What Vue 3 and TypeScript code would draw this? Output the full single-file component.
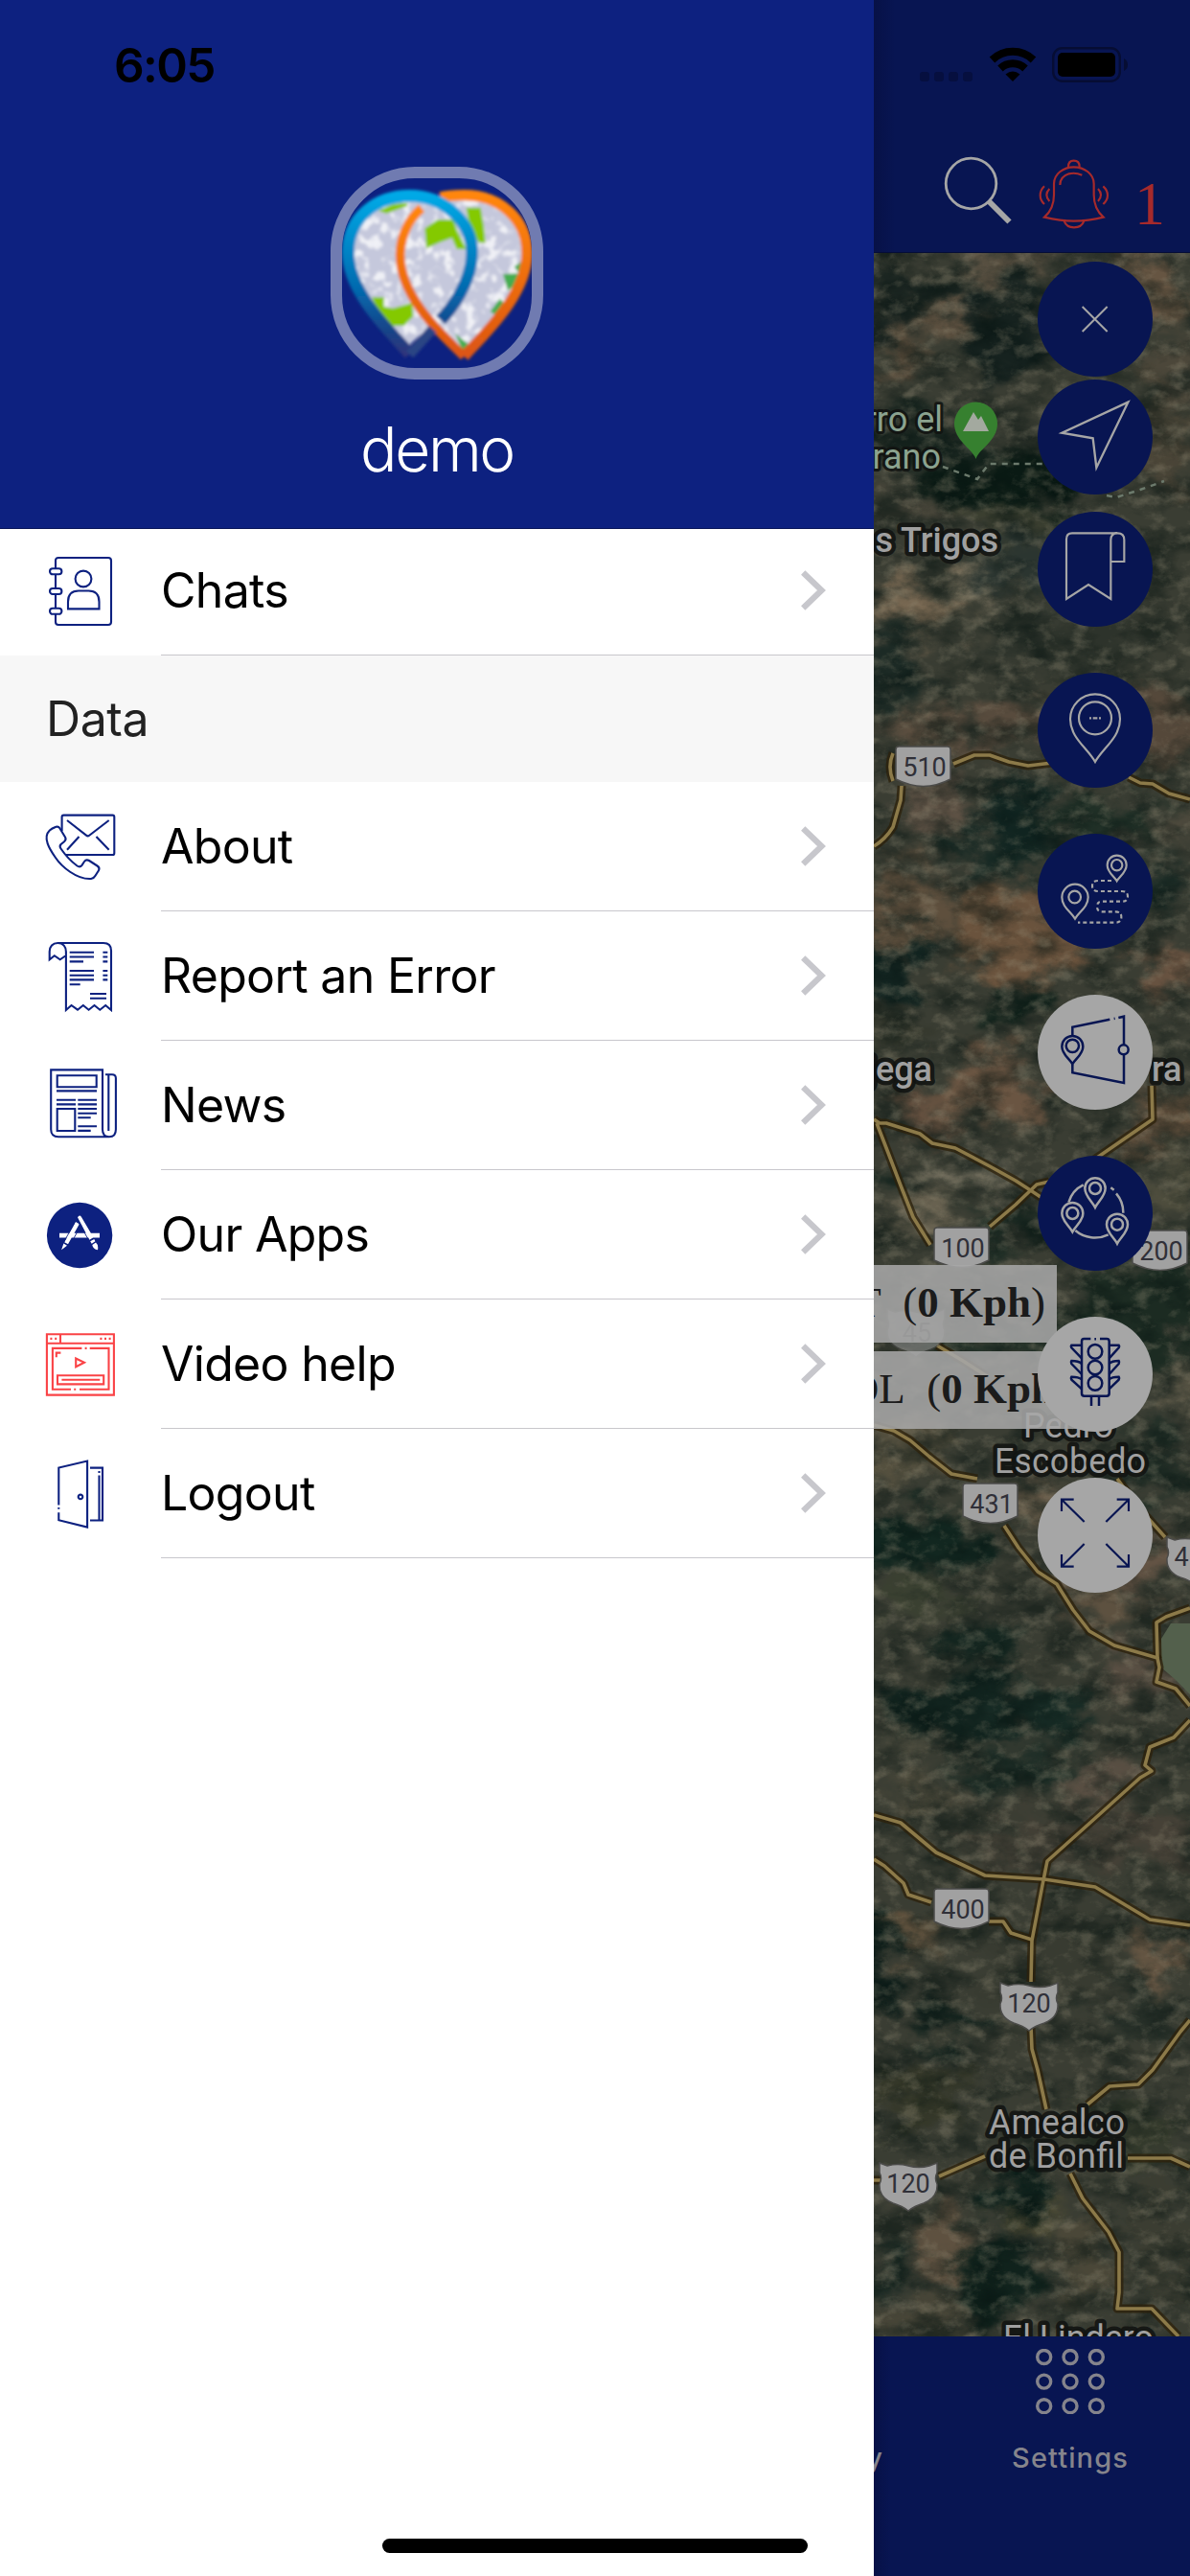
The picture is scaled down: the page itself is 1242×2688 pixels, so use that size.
<script setup lang="ts">
interface Shape {
  d: string
  filled?: boolean
  dash?: string
  width?: number
  knock?: boolean
}
interface MenuItem {
  label: string
  icon: Shape[]
  tone: string
}
interface MapButton {
  name: string
  light: boolean
  gap: number
  width: number
  shapes: Shape[]
}
interface Shield {
  text: string
  x: number
  y: number
  kind: 'state' | 'federal'
}
interface Blob {
  x: number
  y: number
  rx: number
  ry: number
  c: string
}

const ring = (cx: number, cy: number, r: number): string =>
  `M${cx - r} ${cy}a${r} ${r} 0 1 0 ${2 * r} 0a${r} ${r} 0 1 0 ${-2 * r} 0z`

const box = (x: number, y: number, w: number, h: number): string => `M${x} ${y}h${w}v${h}h${-w}z`

const pin = (cx: number, cy: number, r: number, tip: number): string =>
  `M${cx} ${tip}C${cx - r * 0.3} ${cy + (tip - cy) * 0.68} ${cx - r} ${cy + r * 0.75} ${cx - r} ${cy}` +
  `a${r} ${r} 0 0 1 ${2 * r} 0C${cx + r} ${cy + r * 0.75} ${cx + r * 0.3} ${cy + (tip - cy) * 0.68} ${cx} ${tip}z`

const navy = '#0d2180'
const red = '#fa4346'

const chats: MenuItem = {
  label: 'Chats',
  tone: navy,
  icon: [
    { d: 'M10 12V4Q10 1 13 1H65Q68 1 68 4V68Q68 71 65 71H13Q10 71 10 68V60M10 19V33M10 39V54' },
    { d: 'M7 12.3H13.4a3 3 0 0 1 0 6H7a3 3 0 0 1 0-6zM7 33H13.4a3 3 0 0 1 0 6H7a3 3 0 0 1 0-6zM7 53.8H13.4a3 3 0 0 1 0 6H7a3 3 0 0 1 0-6z' },
    { d: ring(39, 23, 8.4) + 'M23 54.4V47Q23 35.5 34 35.5H44.500Q55.500 35.5 55.500 47V54.400z' },
  ],
}

const menu: MenuItem[] = [
  {
    label: 'About',
    tone: navy,
    icon: [
      { d: 'M16.600 19V4.500Q16.600 2.600 18.500 2.600H69.500Q71.300 2.600 71.300 4.500V42.200Q71.300 44 69.500 44H20' },
      { d: 'M22 8L42 23.700Q43.600 25 45.200 23.700L65.700 8M34.500 25L22 38.800M52.500 25L65.700 38.800' },
      { d: 'M3.800 18.500Q6 16.500 10.500 14.800Q13 14 14.200 16L20 25.500Q21.500 28 19 30.200L15.600 33Q13.700 35 15.500 37.500Q23 48.500 32.500 55.500Q35.500 57.500 37.500 54.800L40 51Q42 48.200 45 50L53.500 55.500Q56.500 57.500 55 60.300L51.500 65.700Q50 68.500 47 69C32 70 16 56 10 47C4 38.500 -4 26 3.800 18.500z' },
    ],
  },
  {
    label: 'Report an Error',
    tone: navy,
    icon: [
      { d: 'M20.900 14L14.700 18.300L8.800 14.200L3.700 18.300V10C3.700 4.500 7 1 12.300 1H60Q68 1 68 9V71L62.200 66L56.300 70.700L50.500 66L44.600 70.700L38.800 66L33 70.700L26.500 66L20.900 71V10C20.900 5 18 1 12.300 1' },
      { d: 'M24.700 10.800H50M24.700 15.500H50M24.700 20.400H39M24.700 30H50M24.700 34.700H50M24.700 39.400H50M24.700 44.300H35.700M59.400 10.800H64.300M59.400 15.500H64.300M59.400 20.400H64.300M59.400 30H64.300M59.400 34.700H64.300M59.400 39.400H64.300M46 54H63M46 58.700H63' },
    ],
  },
  {
    label: 'News',
    tone: navy,
    icon: [
      { d: 'M62 3.200H69Q72.900 3.200 72.900 7V60.500Q72.900 68.300 66 68.300H13Q5.200 68.300 5.200 60.500V-1.600H59V60.500Q59 68.300 66 68.300M65.300 3.200V62' },
      { d: box(11.7, 4.3, 41, 11.9) + box(11.7, 39, 18.6, 23) },
      { d: 'M11 20.400H53M11 29.700H31M33.300 29.700H53M11 34.400H31M33.300 34.400H53M33.300 39H53M33.300 43.700H53M33.300 48.300H46.700M33.300 57.200H53M33.300 61.900H46.700' },
    ],
  },
  {
    label: 'Our Apps',
    tone: navy,
    icon: [
      { d: ring(35.1, 36, 34.2), filled: true },
      { d: 'M14 33.700H56V38.500H14zM31 22L34.800 24.200L23 45.300L19.200 43.200zM18.400 44.600L22 46.800L16.100 51.300zM33 17.300Q35 14 37 17L49.500 38.300L45.400 40.700zM46.200 42.300L50.300 39.900L51.400 42.200L47.700 44.700zM48.300 46L52 43.500Q55 46 54 51.300Q49 50.500 48.300 46z', filled: true, knock: true },
      { d: 'M30 22.500L18.500 43.300M36.700 25.500L24.500 47M33 21L45.500 42.500', width: 0.9 },
    ],
  },
  {
    label: 'Video help',
    tone: red,
    icon: [
      { d: box(0.9, 4.2, 70, 63.4) + 'M1 13.700H71M15 4V13.700' },
      { d: 'M4.400 8.900h2M9.200 8.900h2M56.400 8.900h2M61 8.900h2M65.600 8.900h2M40.600 18.900h2M29.200 61.800h2' },
      { d: 'M37.400 18.900H6.900V61.800H26M35 61.800H65.500V18.900H45.700M10.800 28.200V23.600H15.400M31.200 29.500L40 33.700L31.200 38.300z' },
      { d: box(12, 47.200, 48.200, 9.200) + 'M16.400 51.800H56.300' },
    ],
  },
  {
    label: 'Logout',
    tone: navy,
    icon: [
      { d: 'M13.300 47.500V8.600L43.100 1.600V70.600L13.300 63.300V55.300M13.300 50v1.700' },
      { d: ring(36, 38.900, 2.300) },
      { d: 'M46 8.600H59V63.500H46M55.500 16.500V63.500M55.500 12v2' },
    ],
  },
]

const buttons: MapButton[] = [
  { name: 'close', light: false, gap: 0, width: 6, shapes: [{ d: 'M140 141L218 219M218 141L140 219' }] },
  { name: 'locate', light: false, gap: 3, width: 7, shapes: [{ d: 'M283 71L76 167L173 184L184 276z' }] },
  {
    name: 'bookmark', light: false, gap: 18, width: 6.5,
    shapes: [{ d: 'M249 67H108Q90 67 90 86V273L159 228L229 273V88Q229 67 250 67Q271 67 271 88V156H229' }],
  },
  {
    name: 'place', light: false, gap: 48, width: 6.5,
    shapes: [{ d: pin(180, 145, 78, 279) + ring(180, 142, 51) }, { d: 'M162 142h6M173 142h14M192 142h6' }],
  },
  {
    name: 'route', light: false, gap: 48, width: 6.5,
    shapes: [
      { d: pin(248, 98, 30, 148) + ring(248, 98, 17) + pin(117, 199, 41, 266) + ring(116, 198, 19) },
      { d: 'M231 147H190Q171 147 171 163Q171 180 190 180H264Q282 180 282 196Q282 212 264 212H202Q186 212 186 228Q186 244 202 244H244Q262 244 262 261Q262 278 244 278H126', dash: '12 9' },
    ],
  },
  {
    name: 'geofence', light: true, gap: 48, width: 7.5,
    shapes: [
      { d: 'M226 77L109 101V126M109 219V244L270 276V189M270 157V68L253 72M239 75l3 -0.500' },
      { d: ring(269, 172, 15) + pin(109, 162, 33, 217) + ring(109, 160, 20) },
    ],
  },
  {
    name: 'group', light: false, gap: 48, width: 7.5,
    shapes: [
      { d: 'M97 146A88 88 0 0 1 143 91M118 234A95 95 0 0 0 221 247M246 118A92 92 0 0 1 268 179M229 100L239 107' },
      { d: pin(180, 102, 32, 162) + ring(180, 102, 18) + pin(109, 180, 33, 238) + ring(109, 180, 18) + pin(249, 215, 33, 275) + ring(249, 215, 18) },
    ],
  },
  {
    name: 'traffic', light: true, gap: 48, width: 7.5,
    shapes: [
      { d: 'M166 69H145Q138 69 138 77V240Q138 248 146 248H216Q224 248 224 240V77Q224 69 216 69H195M178 70h5M168 249V279M192 249V279' },
      { d: ring(180, 109, 22) + ring(180, 159, 22) + ring(180, 208, 22) },
      { d: 'M138 89H106Q103 92 106 97L138 130M138 147Q128 138 106 138Q103 142 106 147L138 180M138 196Q128 188 106 188Q103 192 106 197L138 226' },
      { d: 'M224 89H254Q257 92 254 97L224 130M224 147Q232 138 254 138Q257 142 254 147L224 180M224 196Q232 188 254 188Q257 192 254 197L224 226' },
    ],
  },
  {
    name: 'expand', light: true, gap: 48, width: 6.5,
    shapes: [{ d: 'M146 138L76 69M75 105V68H113M214 138L284 69M248 68H285V105M146 207L76 277M75 240V278H113M214 207L284 277M248 278H285V240' }],
  },
]

const roads: string[] = [
  'M932 786Q926 800 932 815M941 820L940 835L932 863Q924 876 912 883',
  'M995 797L1017 788L1033 788L1053 795L1073 799L1098 796M1178 811L1190 817L1203 818L1220 828L1242 834',
  'M912 1168L918 1172L925 1172L960 1183L973 1193L997 1198L1033 1217L1060 1232L1077 1243L1095 1255',
  'M915 1172L927 1203L940 1237L953 1270L971 1299',
  'M1033 1280L1060 1257L1082 1236L1095 1233M1142 1210L1203 1168L1202 1133',
  'M912 1487L933 1493L950 1503L970 1520L993 1538L1020 1543M1048 1592L1063 1615L1083 1640L1103 1653L1120 1680L1137 1702L1163 1717L1208 1730L1210 1740L1207 1755L1227 1762L1242 1780',
  'M1208 1730L1207 1693L1217 1687L1242 1678M1166 1543L1190 1575L1216 1604',
  'M1242 1795L1225 1813L1200 1823L1195 1842L1202 1848L1190 1855L1140 1900L1093 1942L1088 1967L1077 2025L1076 2068M1076 2115L1077 2138L1083 2160L1092 2201',
  'M912 1894L940 1902L977 1933L1028 1957L1090 1961L1143 1969L1200 2003L1242 2009',
  'M912 1940L923 1947L943 1965L948 1977L972 1985M1032 2005L1047 2005L1055 2017L1077 2024',
  'M1242 2108L1232 2120L1203 2160L1188 2175L1158 2177L1135 2196',
  'M980 2271L1028 2250M1177 2252L1222 2252L1242 2261M912 2275H920',
  'M1117 2268L1130 2294L1157 2329L1168 2350L1168 2392L1166 2409L1202 2409L1230 2438',
  'M978 1404L1005 1420L1030 1436',
]

const shields: Shield[] = [
  { text: '510', x: 935, y: 779, kind: 'state' },
  { text: '100', x: 975, y: 1281, kind: 'state' },
  { text: '200', x: 1182, y: 1284, kind: 'state' },
  { text: '431', x: 1005, y: 1548, kind: 'state' },
  { text: '400', x: 975, y: 1971, kind: 'state' },
  { text: '120', x: 1044, y: 2069, kind: 'federal' },
  { text: '120', x: 918, y: 2257, kind: 'federal' },
]

const blobs: Blob[] = [
  { x: 960, y: 300, rx: 60, ry: 14, c: '#18231f' }, { x: 925, y: 330, rx: 40, ry: 16, c: '#16211e' },
  { x: 985, y: 335, rx: 32, ry: 9, c: '#6e5a46' }, { x: 935, y: 370, rx: 30, ry: 20, c: '#594b3a' },
  { x: 1050, y: 275, rx: 55, ry: 13, c: '#5f5444' }, { x: 1200, y: 300, rx: 40, ry: 36, c: '#665542' },
  { x: 1050, y: 350, rx: 40, ry: 50, c: '#16221f' }, { x: 1225, y: 380, rx: 25, ry: 30, c: '#4c473a' },
  { x: 960, y: 460, rx: 60, ry: 28, c: '#18251f' }, { x: 1060, y: 500, rx: 90, ry: 28, c: '#0a1a14' },
  { x: 1210, y: 450, rx: 30, ry: 50, c: '#4b4537' }, { x: 1040, y: 545, rx: 60, ry: 20, c: '#3b3f30' },
  { x: 950, y: 535, rx: 40, ry: 14, c: '#49463a' }, { x: 960, y: 625, rx: 48, ry: 26, c: '#776751' },
  { x: 1015, y: 610, rx: 25, ry: 12, c: '#7c7460' }, { x: 1075, y: 590, rx: 50, ry: 30, c: '#2b3530' },
  { x: 1100, y: 670, rx: 90, ry: 30, c: '#2d332b' }, { x: 930, y: 700, rx: 36, ry: 34, c: '#1c2a25' },
  { x: 1060, y: 750, rx: 50, ry: 22, c: '#584b3d' }, { x: 960, y: 765, rx: 60, ry: 16, c: '#5d4f40' },
  { x: 1210, y: 760, rx: 40, ry: 40, c: '#55483a' }, { x: 975, y: 845, rx: 34, ry: 30, c: '#5d5144' },
  { x: 1060, y: 850, rx: 50, ry: 28, c: '#102420' }, { x: 1160, y: 860, rx: 70, ry: 22, c: '#1f2f26' },
  { x: 1040, y: 890, rx: 50, ry: 14, c: '#152823' }, { x: 1225, y: 860, rx: 30, ry: 15, c: '#4e4a3d' },
  { x: 950, y: 950, rx: 50, ry: 40, c: '#5e4f3d' }, { x: 1065, y: 975, rx: 66, ry: 50, c: '#6a533d' },
  { x: 925, y: 1010, rx: 38, ry: 40, c: '#142622' }, { x: 1215, y: 925, rx: 30, ry: 24, c: '#1d2d27' },
  { x: 1215, y: 1020, rx: 34, ry: 28, c: '#675240' }, { x: 1060, y: 1052, rx: 34, ry: 18, c: '#0f211a' },
  { x: 1040, y: 1135, rx: 60, ry: 34, c: '#6a5542' }, { x: 965, y: 1160, rx: 30, ry: 22, c: '#64503f' },
  { x: 930, y: 1070, rx: 30, ry: 20, c: '#35382d' }, { x: 1215, y: 1170, rx: 32, ry: 34, c: '#66523e' },
  { x: 1015, y: 1225, rx: 50, ry: 14, c: '#75705f' }, { x: 950, y: 1262, rx: 36, ry: 16, c: '#6b6452' },
  { x: 920, y: 1225, rx: 16, ry: 20, c: '#1e2e26' }, { x: 1060, y: 1280, rx: 44, ry: 22, c: '#1d2c24' },
  { x: 1220, y: 1240, rx: 25, ry: 30, c: '#4e4d3d' }, { x: 1180, y: 1370, rx: 80, ry: 60, c: '#1c2b22' },
  { x: 1040, y: 1405, rx: 80, ry: 18, c: '#25332a' }, { x: 1235, y: 1450, rx: 18, ry: 30, c: '#5f5a49' },
  { x: 955, y: 1515, rx: 40, ry: 24, c: '#56513f' }, { x: 1080, y: 1560, rx: 40, ry: 22, c: '#665a48' },
  { x: 1200, y: 1530, rx: 40, ry: 40, c: '#222f27' }, { x: 960, y: 1610, rx: 70, ry: 34, c: '#122720' },
  { x: 1150, y: 1670, rx: 40, ry: 30, c: '#5d5140' }, { x: 1200, y: 1630, rx: 24, ry: 24, c: '#635344' },
  { x: 950, y: 1670, rx: 50, ry: 22, c: '#3a4031' }, { x: 1030, y: 1715, rx: 40, ry: 24, c: '#13251f' },
  { x: 1195, y: 1745, rx: 44, ry: 22, c: '#584e42' }, { x: 990, y: 1785, rx: 66, ry: 38, c: '#11231e' },
  { x: 1085, y: 1790, rx: 50, ry: 28, c: '#162a24' }, { x: 935, y: 1815, rx: 26, ry: 14, c: '#545243' },
  { x: 1060, y: 1850, rx: 60, ry: 20, c: '#1d2d26' }, { x: 1140, y: 1860, rx: 44, ry: 20, c: '#594f43' },
  { x: 960, y: 1880, rx: 50, ry: 14, c: '#4a483a' }, { x: 1100, y: 1925, rx: 90, ry: 24, c: '#423f35' },
  { x: 1190, y: 1910, rx: 50, ry: 30, c: '#464137' }, { x: 915, y: 2045, rx: 24, ry: 50, c: '#0d1d19' },
  { x: 955, y: 2015, rx: 28, ry: 22, c: '#5f513d' }, { x: 1090, y: 2040, rx: 80, ry: 40, c: '#383b31' },
  { x: 1205, y: 2050, rx: 24, ry: 26, c: '#665643' }, { x: 985, y: 2115, rx: 28, ry: 14, c: '#10211c' },
  { x: 1190, y: 2100, rx: 40, ry: 25, c: '#2c342c' }, { x: 960, y: 2182, rx: 50, ry: 30, c: '#343728' },
  { x: 1180, y: 2224, rx: 60, ry: 30, c: '#343a2c' }, { x: 1060, y: 2288, rx: 30, ry: 24, c: '#0c1f1a' },
  { x: 985, y: 2340, rx: 26, ry: 44, c: '#5e5140' }, { x: 1080, y: 2312, rx: 34, ry: 14, c: '#4c4a34' },
  { x: 1040, y: 2376, rx: 42, ry: 44, c: '#10221c' }, { x: 1130, y: 2360, rx: 30, ry: 40, c: '#4a4738' },
  { x: 920, y: 2370, rx: 20, ry: 24, c: '#1b2923' }, { x: 1215, y: 2340, rx: 30, ry: 60, c: '#3b3d32' },
  { x: 960, y: 2422, rx: 60, ry: 18, c: '#474537' },
]

const shieldPath = (s: Shield): string =>
  s.kind === 'state'
    ? `M${s.x + 3} ${s.y}H${s.x + 54}Q${s.x + 57} ${s.y} ${s.x + 57} ${s.y + 3}V${s.y + 34}Q${s.x + 29} ${s.y + 49} ${s.x} ${s.y + 34}V${s.y + 3}Q${s.x} ${s.y} ${s.x + 3} ${s.y}z`
    : `M${s.x} ${s.y}l8 3q11 -3 22 0q11 3 22 0l8 -3v10q-3 6 0 12q1 14 -14 20q-10 3 -16 8q-6 -5 -16 -8q-15 -6 -14 -20q3 -6 0 -12z`

const faintShield: Shield = { text: '45', x: 926, y: 1366, kind: 'federal' }
const edgeShield: Shield = { text: '4', x: 1218, y: 1604, kind: 'federal' }

const dots = [0, 1, 2, 3, 4, 5, 6, 7, 8]
</script>

<template>
  <div class="app">
    <aside class="drawer">
      <header class="profile">
        <div class="clock">6:05</div>
        <div class="avatar">
          <svg viewBox="81 78 594 594" width="198" height="198">
            <defs>
              <linearGradient id="blue" x1="0" y1="0" x2="0" y2="1">
                <stop offset="0" stop-color="#02a9e6" /><stop offset=".6" stop-color="#0468ad" /><stop offset=".85" stop-color="#164488" /><stop offset="1" stop-color="#30357c" />
              </linearGradient>
              <linearGradient id="orange" x1="0" y1="0" x2="0" y2="1">
                <stop offset="0" stop-color="#ff860c" /><stop offset="1" stop-color="#dc5512" />
              </linearGradient>
              <filter id="speckle" x="0" y="0" width="1" height="1" color-interpolation-filters="sRGB">
                <feTurbulence type="fractalNoise" baseFrequency=".03" numOctaves="2" seed="4" />
                <feColorMatrix values="0 0 0 0 1  0 0 0 0 1  0 0 0 0 1  6 0 0 0 -3" />
                <feComposite in2="SourceGraphic" operator="in" />
              </filter>
              <filter id="soft"><feGaussianBlur stdDeviation="4" /></filter>
            </defs>
            <g filter="url(#soft)">
              <path d="M293 600C250 560 115 430 115 310C115 210 190 140 293 140C330 140 360 146 380 156C400 142 430 135 463 135C560 135 655 200 655 310C655 440 510 580 463 622C430 600 400 560 375 540C350 550 310 580 293 600z" fill="#c5c8dc" />
              <path d="M293 600C250 560 115 430 115 310C115 210 190 140 293 140C330 140 360 146 380 156C400 142 430 135 463 135C560 135 655 200 655 310C655 440 510 580 463 622C430 600 400 560 375 540C350 550 310 580 293 600z" filter="url(#speckle)" opacity=".75" />
              <path d="M340 235L380 208H430L440 240L470 300H440L425 265L385 280L345 298zM470 170H515L525 230L530 280H510L480 230zM175 450H212V480L240 485L300 468L304 510L275 540H235L190 490zM195 180L240 160L285 155V165L220 188z" fill="#84c900" />
              <path d="M620 355L655 330L640 400L600 430L585 378L635 376zM545 495L575 455L590 470L560 505zM435 565L480 600L460 620z" fill="#45ad50" />
              <path d="M463 636C420 590 260 460 263 315C264 260 290 205 330 172" fill="none" stroke="url(#orange)" stroke-width="29" />
              <path d="M463 636C510 580 660 450 660 312C660 210 580 131 463 131C430 131 410 132 390 138" fill="none" stroke="url(#orange)" stroke-width="34" />
              <path d="M293 628C240 565 100 440 100 310C100 200 190 133 293 133C400 133 488 215 488 310C488 405 420 490 390 522" fill="none" stroke="url(#blue)" stroke-width="38" />
              <path d="M293 630L365 550" stroke="#294484" stroke-width="30" />
            </g>
          </svg>
        </div>
        <div class="user">demo</div>
      </header>

      <nav class="menu">
        <div class="row first">
          <svg class="icon" viewBox="0 0 72 72" :stroke="chats.tone"><path v-for="(s, i) in chats.icon" :key="i" :d="s.d" /></svg>
          <div class="cell">
            <span class="label">{{ chats.label }}</span>
            <svg class="chevron" viewBox="0 0 26 42"><path d="M2.200 2.500L21.500 21L2.200 39.500" /></svg>
          </div>
        </div>
        <h2 class="section">Data</h2>
        <div v-for="item in menu" :key="item.label" class="row">
          <svg class="icon" viewBox="0 0 72 72" :stroke="item.tone">
            <path
              v-for="(s, i) in item.icon" :key="i" :d="s.d"
              :fill="s.filled ? (s.knock ? '#fff' : item.tone) : 'none'"
              :stroke="s.filled ? 'none' : item.tone"
              :stroke-width="s.width"
            />
          </svg>
          <div class="cell">
            <span class="label">{{ item.label }}</span>
            <svg class="chevron" viewBox="0 0 26 42"><path d="M2.200 2.500L21.500 21L2.200 39.500" /></svg>
          </div>
        </div>
      </nav>
    </aside>

    <main class="screen">
      <header class="topbar">
        <div class="status">
          <svg class="signal" viewBox="0 0 55 10" width="55" height="10">
            <rect v-for="n in 4" :key="n" :x="(n - 1) * 15" y="0" width="10" height="10" rx="3" />
          </svg>
          <svg viewBox="0 0 50 37" width="50" height="37">
            <path d="M3.500 13.500A31 31 0 0 1 46.500 13.500" class="wave" />
            <path d="M12 22.500A19 19 0 0 1 38 22.500" class="wave" />
            <path d="M25 36L17.500 28.500Q25 22.500 32.500 28.500z" />
          </svg>
          <svg class="battery" viewBox="0 0 80 37" width="80" height="37">
            <rect x="1.200" y="1.200" width="69.600" height="34.600" rx="9.500" fill="none" stroke="#060d33" stroke-width="2.400" />
            <rect x="6" y="6" width="60" height="25" rx="5" />
            <path d="M75 12Q79 14 79 18.500Q79 23 75 25z" fill="#060d33" />
          </svg>
        </div>
        <div class="tools">
          <svg class="search" viewBox="0 0 72 72" width="72" height="72">
            <circle cx="28.500" cy="28.500" r="26.300" stroke-width="2.800" />
            <path d="M47.500 47.500L68.500 68.500" stroke-width="6" />
          </svg>
          <svg class="bell" viewBox="553 498 222 220" width="74" height="73.300">
            <path d="M571 680C585 668 601 645 601 610V575C601 545 630 523 663 523C697 523 726 545 726 575V610C726 645 742 668 756 680C720 689 690 692 663 692C636 692 605 688 571 680z" />
            <path d="M646 522Q646 503 663 503Q681 503 681 522M633 692Q640 712 664 712Q688 712 695 692M620 579Q620 553 648 544Q668 539 689 548" />
            <path d="M587 591Q578 600 578 610Q578 621 587 630M571 583Q558 595 558 611Q558 627 571 639M739 591Q748 600 748 610Q748 621 739 630M755 583Q769 595 769 611Q769 627 755 639" />
          </svg>
          <span class="count">1</span>
        </div>
      </header>

      <section class="map">
        <svg class="terrain" viewBox="912 264 330 2174" width="330" height="2174">
          <defs>
            <filter id="patches" filterUnits="userSpaceOnUse" x="880" y="230" width="400" height="2240" color-interpolation-filters="sRGB">
              <feGaussianBlur stdDeviation="9" result="soft" />
              <feTurbulence type="fractalNoise" baseFrequency=".02 .03" numOctaves="5" seed="8" result="n" />
              <feDisplacementMap in="soft" in2="n" scale="90" xChannelSelector="R" yChannelSelector="G" />
            </filter>
            <filter id="shade" filterUnits="userSpaceOnUse" x="912" y="264" width="330" height="2174" color-interpolation-filters="sRGB">
              <feTurbulence type="fractalNoise" baseFrequency=".022 .036" numOctaves="6" seed="21" />
              <feColorMatrix values="0 0 0 0 .02  0 0 0 0 .07  0 0 0 0 .06  0 2.600 0 0 -1.050" />
            </filter>
            <filter id="glint" filterUnits="userSpaceOnUse" x="912" y="264" width="330" height="2174" color-interpolation-filters="sRGB">
              <feTurbulence type="fractalNoise" baseFrequency=".05 .07" numOctaves="5" seed="5" />
              <feColorMatrix values="0 0 0 0 .6  0 0 0 0 .57  0 0 0 0 .48  3 0 0 0 -1.450" />
            </filter>
          </defs>
          <g filter="url(#patches)">
            <rect x="860" y="210" width="440" height="2280" fill="#3a3d33" />
            <ellipse v-for="(b, i) in blobs" :key="i" :cx="b.x + 2" :cy="b.y" :rx="b.rx" :ry="b.ry" :fill="b.c" />
          </g>
          <rect x="912" y="264" width="330" height="2174" filter="url(#shade)" opacity=".5" />
          <rect x="912" y="264" width="330" height="2174" filter="url(#glint)" opacity=".32" />
          <path d="M1222 1694H1242V1768L1226 1752L1212 1740V1710z" fill="#53604c" />

          <g class="roads">
            <path v-for="(r, i) in roads" :key="'c' + i" :d="r" stroke="#2c2009" stroke-width="9" stroke-opacity=".75" />
            <path v-for="(r, i) in roads" :key="'r' + i" :d="r" stroke="#8c7a49" stroke-width="3.600" />
          </g>
          <path d="M984 487L1020 500L1032 484H1100M1155 517L1165 519L1190 511L1215 502" class="trail" />

          <g class="shield faint">
            <path :d="shieldPath(faintShield)" />
            <text :x="faintShield.x + 31" :y="faintShield.y + 34">{{ faintShield.text }}</text>
          </g>
          <g class="shield">
            <path :d="shieldPath(edgeShield)" />
            <text :x="edgeShield.x + 15" :y="edgeShield.y + 30">{{ edgeShield.text }}</text>
          </g>
          <g class="shield" v-for="(s, i) in shields" :key="'s' + i">
            <path :d="shieldPath(s)" />
            <text :x="s.x + 30" :y="s.y + 31">{{ s.text }}</text>
          </g>

          <g class="park">
            <path d="M1018.500 479C1015 468 996 460 996 442A22.500 22.500 0 0 1 1041 442C1041 460 1022 468 1018.500 479z" fill="#36802f" />
            <path d="M1005 450L1016 430L1021 438L1024 434L1032 450z" fill="#a3a99f" />
          </g>
          <g class="names">
            <text x="984" y="450" text-anchor="end" class="green">rro el</text>
            <text x="982" y="488.500" text-anchor="end" class="green">rano</text>
            <text x="1042" y="576" text-anchor="end" class="bold">s Trigos</text>
            <text x="973" y="1128" text-anchor="end" class="bold">jega</text>
            <text x="1202" y="1128" class="bold">ra</text>
            <text x="1068" y="1500" textLength="94">Pedro</text>
            <text x="1038" y="1536.500" textLength="158">Escobedo</text>
            <text x="1032" y="2226.500" textLength="142">Amealco</text>
            <text x="1032" y="2262" textLength="141">de Bonfil</text>
            <text x="1047" y="2452" textLength="157">El Lindero</text>
          </g>
        </svg>

        <div class="vehicles">
          <div class="tag first-tag">T&nbsp; (<b>0 Kph</b>)</div>
          <div class="tag second-tag">OL&nbsp; (<b>0 Kph</b>)</div>
        </div>

        <div class="rail">
          <button
            v-for="b in buttons" :key="b.name" type="button" class="round"
            :class="{ light: b.light }" :style="{ marginTop: b.gap + 'px' }" :aria-label="b.name"
          >
            <svg viewBox="0 0 360 360" width="120" height="120" :stroke-width="b.width">
              <path v-for="(s, i) in b.shapes" :key="i" :d="s.d" :stroke-dasharray="s.dash" />
            </svg>
          </button>
        </div>
      </section>

      <footer class="tabs">
        <div class="tab cut">y</div>
        <div class="tab">
          <svg viewBox="0 0 72 68" width="72" height="68">
            <circle v-for="n in dots" :key="n" :cx="8.700 + (n % 3) * 27.300" :cy="8.500 + Math.floor(n / 3) * 25.600" r="7" />
          </svg>
          <span>Settings</span>
        </div>
      </footer>
    </main>

    <div class="home"></div>
  </div>
</template>

<style>
body {
  margin: 0;
  background: #fff;
}
</style>

<style scoped>
.app {
  position: relative;
  display: flex;
  width: 1242px;
  height: 2688px;
  overflow: hidden;
  font-family: Inter, 'Liberation Sans', sans-serif;
}
.drawer {
  width: 912px;
  height: 2688px;
  background: #fff;
}
.profile {
  display: flex;
  flex-direction: column;
  align-items: center;
  box-sizing: border-box;
  height: 552px;
  background: #0d2180;
  border-bottom: 1px solid #091658;
}
.clock {
  align-self: flex-start;
  box-sizing: border-box;
  height: 174px;
  padding: 38px 0 0 119px;
  font-size: 49.5px;
  font-weight: 600;
  line-height: 60px;
  letter-spacing: -1.6px;
  color: #000;
}
.avatar {
  width: 198px;
  height: 198px;
  border: 12px solid #707bb1;
  border-radius: 88px;
  overflow: hidden;
}
.avatar svg {
  display: block;
}
.user {
  margin-top: 33px;
  font-size: 64px;
  font-weight: 300;
  line-height: 80px;
  letter-spacing: -2.4px;
  color: #fff;
}
.row {
  display: flex;
  align-items: center;
  height: 135px;
  padding-left: 48px;
}
.row.first {
  height: 132px;
}
.row.first .icon {
  margin-top: -3px;
}
.row.first .cell {
  padding-bottom: 3px;
}
.icon {
  flex: none;
  width: 72px;
  height: 72px;
  margin-right: 48px;
  overflow: visible;
  fill: none;
  stroke-width: 2.1;
}
.cell {
  display: flex;
  flex: 1;
  align-items: center;
  justify-content: space-between;
  box-sizing: border-box;
  height: 100%;
  padding-right: 50px;
  border-bottom: 1px solid #c8c7cc;
}
.label {
  font-size: 50px;
  line-height: 60px;
  letter-spacing: -0.7px;
  color: #000;
}
.chevron {
  width: 26px;
  height: 42px;
  fill: none;
  stroke: #c7c7cc;
  stroke-width: 6.2;
}
.section {
  display: flex;
  align-items: center;
  height: 132px;
  margin: 0;
  padding-left: 48px;
  background: #f7f7f7;
  font-size: 50px;
  font-weight: 400;
  letter-spacing: -0.4px;
  color: #222;
}
.screen {
  display: flex;
  flex-direction: column;
  width: 330px;
  overflow: hidden;
  background: #081552;
}
.topbar {
  box-sizing: border-box;
  height: 264px;
  padding-top: 49px;
  border-bottom: 1px solid #050d36;
  background: linear-gradient(90deg, #071147 0, #081552 22px);
}
.status {
  display: flex;
  align-items: flex-end;
  height: 37px;
  padding-left: 48px;
}
.signal {
  margin: 0 17px 1px 0;
  fill: #060f3f;
}
.wave {
  fill: none;
  stroke: #000;
  stroke-width: 8;
}
.battery {
  margin-left: 16px;
}
.tools {
  display: flex;
  margin-top: 77px;
  padding-left: 73px;
}
.search {
  fill: none;
  stroke: #a6a6a6;
}
.bell {
  margin: 3px 0 0 27px;
  fill: none;
  stroke: #a62a2b;
  stroke-width: 6.5;
}
.count {
  margin: 13px 0 0 26px;
  font-family: 'Liberation Serif', serif;
  font-size: 64px;
  line-height: 74px;
  color: #a62a2b;
}
.map {
  position: relative;
  flex: none;
  height: 2174px;
  overflow: hidden;
}
.terrain {
  display: block;
}
.roads {
  fill: none;
  stroke-linejoin: round;
}
.trail {
  fill: none;
  stroke: #6c7a6c;
  stroke-width: 2.5;
  stroke-dasharray: 6 6;
}
.shield path {
  fill: #a1a1a1;
  stroke: #4b4b49;
  stroke-width: 1.5;
}
.shield text {
  font: 400 27px Roboto, sans-serif;
  fill: #303038;
  text-anchor: middle;
}
.faint {
  opacity: 0.5;
}
.names text {
  font: 400 36px Roboto, sans-serif;
  fill: #a0a0a0;
  stroke: #111311;
  stroke-width: 9;
  stroke-linejoin: round;
  stroke-opacity: 0.9;
  paint-order: stroke;
}
.names .green {
  fill: #8ba38f;
  stroke-width: 6;
}
.names .bold {
  font-weight: 500;
}
.vehicles {
  position: absolute;
  top: 1056px;
  left: 0;
  display: flex;
  flex-direction: column;
  gap: 9px;
}
.tag {
  display: flex;
  justify-content: flex-end;
  box-sizing: border-box;
  height: 81px;
  padding-right: 12px;
  overflow: hidden;
  background: rgba(166, 166, 166, 0.88);
  font-family: 'Liberation Serif', serif;
  font-size: 45px;
  line-height: 79px;
  white-space: pre;
  color: #1b1b1b;
}
.first-tag {
  width: 191px;
}
.second-tag {
  width: 216px;
}
.rail {
  position: absolute;
  top: 9px;
  left: 171px;
  display: flex;
  flex-direction: column;
}
.round {
  width: 120px;
  height: 120px;
  padding: 0;
  border: 0;
  border-radius: 50%;
  background: #081552;
}
.round svg {
  display: block;
  fill: none;
  stroke: #a6a6a6;
}
.round.light {
  background: #a6a6a6;
}
.round.light svg {
  stroke: #081552;
}
.tabs {
  display: flex;
  height: 250px;
  background: linear-gradient(90deg, #071147 0, #081552 18px);
  color: #85848c;
  font-size: 29px;
  font-weight: 500;
  line-height: 36px;
}
.tab {
  display: flex;
  flex: none;
  flex-direction: column;
  align-items: center;
  box-sizing: border-box;
  width: 250px;
  padding-top: 13px;
  letter-spacing: 1.1px;
}
.tab svg {
  fill: none;
  stroke: #85848c;
  stroke-width: 3.4;
}
.tab span {
  margin-top: 28px;
}
.tab.cut {
  align-items: flex-end;
  width: 80px;
  padding-top: 109px;
  padding-right: 70px;
}
.home {
  position: absolute;
  left: 399px;
  bottom: 24px;
  width: 444px;
  height: 15px;
  border-radius: 8px;
  background: #000;
}
</style>
